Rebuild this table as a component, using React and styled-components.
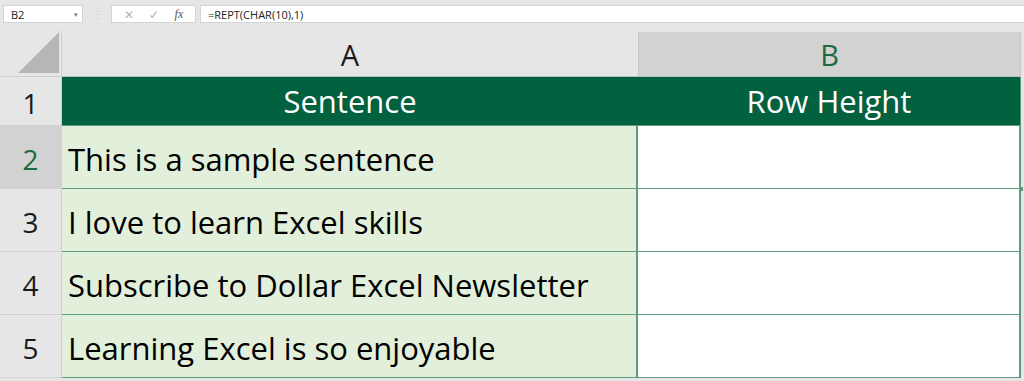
import React from "react";
import styled, { createGlobalStyle } from "styled-components";

const COLORS = {
  chrome: "#e6e6e6",
  headerSel: "#d2d2d2",
  tableHead: "#02613f",
  band: "#e2efda",
  grid: "#5c9c7c",
  headText: "#1a1a1a",
  selText: "#1e6b41",
};

const GlobalStyle = createGlobalStyle`
  body {
    margin: 0;
    background: ${COLORS.chrome};
    font-family: "Open Sans", "Liberation Sans", sans-serif;
  }
`;

const rows = [
  "This is a sample sentence",
  "I love to learn Excel skills",
  "Subscribe to Dollar Excel Newsletter",
  "Learning Excel is so enjoyable",
];

const App = () => {
  return (
    <>
      <GlobalStyle />
      <FormulaBar>
        <NameBox>
          <span>B2</span>
          <Caret>▾</Caret>
        </NameBox>
        <Grip>⋮</Grip>
        <ActionBox>
          <Action>✕</Action>
          <Action>✓</Action>
          <Fx>fx</Fx>
        </ActionBox>
        <FormulaInput>=REPT(CHAR(10),1)</FormulaInput>
      </FormulaBar>
      <Sheet>
        <Corner>
          <svg width="42" height="42" viewBox="0 0 42 42">
            <polygon points="41,0 41,41 0,41" fill="#b7b7b7" />
          </svg>
        </Corner>
        <ColHead>A</ColHead>
        <ColHead $selected>B</ColHead>
        <Spacer />

        <RowHead>1</RowHead>
        <TableHead>Sentence</TableHead>
        <TableHead $last>Row Height</TableHead>
        <Spacer />

        {rows.map((text, i) => (
          <React.Fragment key={text}>
            <RowHead $selected={i === 0}>{i + 2}</RowHead>
            <TextCell>{text}</TextCell>
            <EmptyCell $active={i === 0}>
              {i === 0 && <Handle />}
            </EmptyCell>
            <Spacer />
          </React.Fragment>
        ))}
      </Sheet>
    </>
  );
};

const FormulaBar = styled.div`
  display: flex;
  align-items: stretch;
  height: 30px;
  box-sizing: border-box;
  padding: 5px 0 7px 3px;
  gap: 4px;
  font-size: 11px;
  color: #222;
`;

const NameBox = styled.div`
  width: 80px;
  box-sizing: border-box;
  background: #fff;
  border: 1px solid #d4d4d4;
  display: flex;
  align-items: center;
  justify-content: space-between;
  padding: 0 4px 0 7px;
`;

const Caret = styled.span`
  font-size: 7px;
  color: #777;
`;

const Grip = styled.div`
  width: 20px;
  display: flex;
  align-items: center;
  justify-content: center;
  color: #c4c4c4;
  font-size: 11px;
`;

const ActionBox = styled.div`
  width: 85px;
  box-sizing: border-box;
  background: #fff;
  border: 1px solid #d4d4d4;
  display: flex;
  align-items: center;
  justify-content: space-around;
  padding: 0 4px;
`;

const Action = styled.span`
  color: #b3b3b3;
  font-size: 12px;
`;

const Fx = styled.span`
  font-family: "Liberation Serif", serif;
  font-style: italic;
  font-size: 12px;
  color: #555;
`;

const FormulaInput = styled.div`
  flex: 1;
  background: #fff;
  border: 1px solid #d4d4d4;
  border-right: none;
  display: flex;
  align-items: center;
  padding-left: 7px;
`;

const Sheet = styled.div`
  display: grid;
  grid-template-columns: 62px 576px 383px 1fr;
  grid-template-rows: 47px 49px repeat(4, 63px);
`;

const Spacer = styled.div``;

const Corner = styled.div`
  display: flex;
  align-items: flex-end;
  justify-content: flex-end;
  padding: 0 1px 2px 0;
  border-right: 1px solid #d0d0d0;
  border-bottom: 1px solid #cfcfcf;
`;

const ColHead = styled.div`
  margin-top: 2px;
  display: flex;
  align-items: center;
  justify-content: center;
  font-size: 29px;
  color: ${(p) => (p.$selected ? COLORS.selText : COLORS.headText)};
  background: ${(p) => (p.$selected ? COLORS.headerSel : COLORS.chrome)};
  border-bottom: 1px solid #bdbdbd;
  border-left: ${(p) => (p.$selected ? "1px solid #c6c6c6" : "none")};
  border-right: ${(p) => (p.$selected ? "1px solid #c6c6c6" : "none")};
`;

const RowHead = styled.div`
  display: flex;
  align-items: center;
  justify-content: center;
  padding-top: 4px;
  box-sizing: border-box;
  font-size: 28px;
  color: ${(p) => (p.$selected ? COLORS.selText : COLORS.headText)};
  background: ${(p) => (p.$selected ? COLORS.headerSel : COLORS.chrome)};
  border-right: 1px solid #cfcfcf;
  border-bottom: 1px solid #d0d0d0;
`;

const TableHead = styled.div`
  background: ${COLORS.tableHead};
  color: #fff;
  display: flex;
  align-items: center;
  justify-content: center;
  font-size: 31px;
  border-bottom: 1px solid ${COLORS.grid};
  border-right: ${(p) => (p.$last ? `1px solid ${COLORS.grid}` : "none")};
`;

const TextCell = styled.div`
  background: ${COLORS.band};
  display: flex;
  align-items: center;
  padding: 3px 0 0 6px;
  box-sizing: border-box;
  font-size: 31px;
  color: #000;
  border-bottom: 1px solid ${COLORS.grid};
  border-right: 2px solid ${COLORS.grid};
  white-space: nowrap;
`;

const EmptyCell = styled.div`
  position: relative;
  background: #fff;
  border-bottom: 1px solid ${COLORS.grid};
  border-right: 2px solid ${COLORS.grid};
`;

const Handle = styled.div`
  position: absolute;
  right: -4px;
  bottom: -3px;
  width: 4px;
  height: 4px;
  background: ${COLORS.grid};
`;

export default App;
